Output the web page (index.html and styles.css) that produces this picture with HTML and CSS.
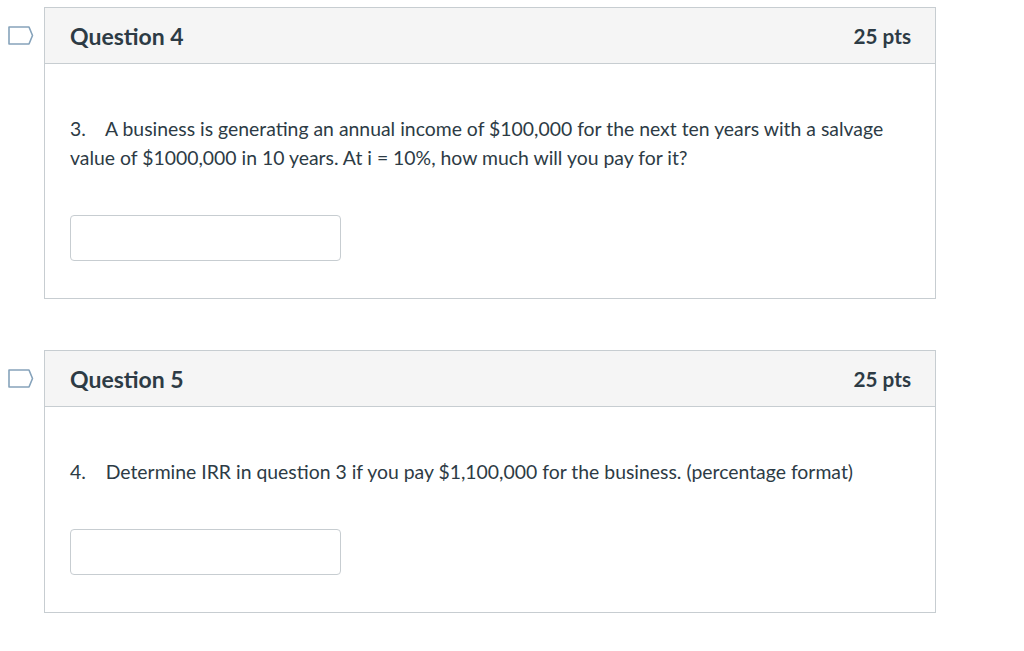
FILE: index.html
```html
<!DOCTYPE html>
<html>
<head>
<meta charset="utf-8">
<link rel="stylesheet" href="styles.css">
</head>
<body>
<div class="page">
  <div class="question-row">
    <div class="flag">
      <svg width="26" height="19" viewBox="0 0 26 19"><path d="M1 1 H21 L24.5 9.5 L21 18 H1 Z" fill="none" stroke="#86a3bb" stroke-width="1.6" stroke-linejoin="round"/></svg>
    </div>
    <div class="card">
      <div class="card-header">
        <span class="q-name">Question 4</span>
        <span class="q-pts">25 pts</span>
      </div>
      <div class="card-body">
        <p class="q-text">3.&nbsp;&nbsp;&nbsp; A business is generating an annual income of $100,000 for the next ten years with a salvage value of $1000,000 in 10 years. At i = 10%, how much will you pay for it?</p>
        <div class="answer"></div>
      </div>
    </div>
  </div>
  <div class="question-row">
    <div class="flag">
      <svg width="26" height="19" viewBox="0 0 26 19"><path d="M1 1 H21 L24.5 9.5 L21 18 H1 Z" fill="none" stroke="#86a3bb" stroke-width="1.6" stroke-linejoin="round"/></svg>
    </div>
    <div class="card">
      <div class="card-header">
        <span class="q-name">Question 5</span>
        <span class="q-pts">25 pts</span>
      </div>
      <div class="card-body">
        <p class="q-text">4.&nbsp;&nbsp;&nbsp; Determine IRR in question 3 if you pay $1,100,000 for the business. (percentage format)</p>
        <div class="answer"></div>
      </div>
    </div>
  </div>
</div>
</body>
</html>
```
FILE: styles.css
```css
html, body {
  margin: 0;
  padding: 0;
  background: #ffffff;
}
body {
  font-family: Lato, "Noto Sans", sans-serif;
  color: #2d3b45;
}
.page {
  padding-top: 7px;
  display: flex;
  flex-direction: column;
  gap: 51px;
}
.question-row {
  display: flex;
  align-items: flex-start;
}
.flag {
  width: 44px;
  padding-top: 19px;
  padding-left: 8px;
  box-sizing: border-box;
}
.flag svg {
  display: block;
}
.card {
  width: 892px;
  border: 1px solid #c7cdd1;
  box-sizing: border-box;
}
.card-header {
  height: 55px;
  background: #f5f5f5;
  border-bottom: 1px solid #c7cdd1;
  display: flex;
  justify-content: space-between;
  align-items: center;
  padding: 0 24px 0 25px;
  font-weight: 700;
}
.q-name {
  font-size: 23px;
}
.q-pts {
  font-size: 20.7px;
}
.card-body {
  padding: 50px 25px 37px 25px;
}
.q-text {
  margin: 0;
  font-size: 19.4px;
  line-height: 29px;
  max-width: 830px;
}
.answer {
  margin-top: 43px;
  width: 271px;
  height: 46px;
  box-sizing: border-box;
  border: 1px solid #c7cdd1;
  border-radius: 4px;
  background: #fff;
}
```
